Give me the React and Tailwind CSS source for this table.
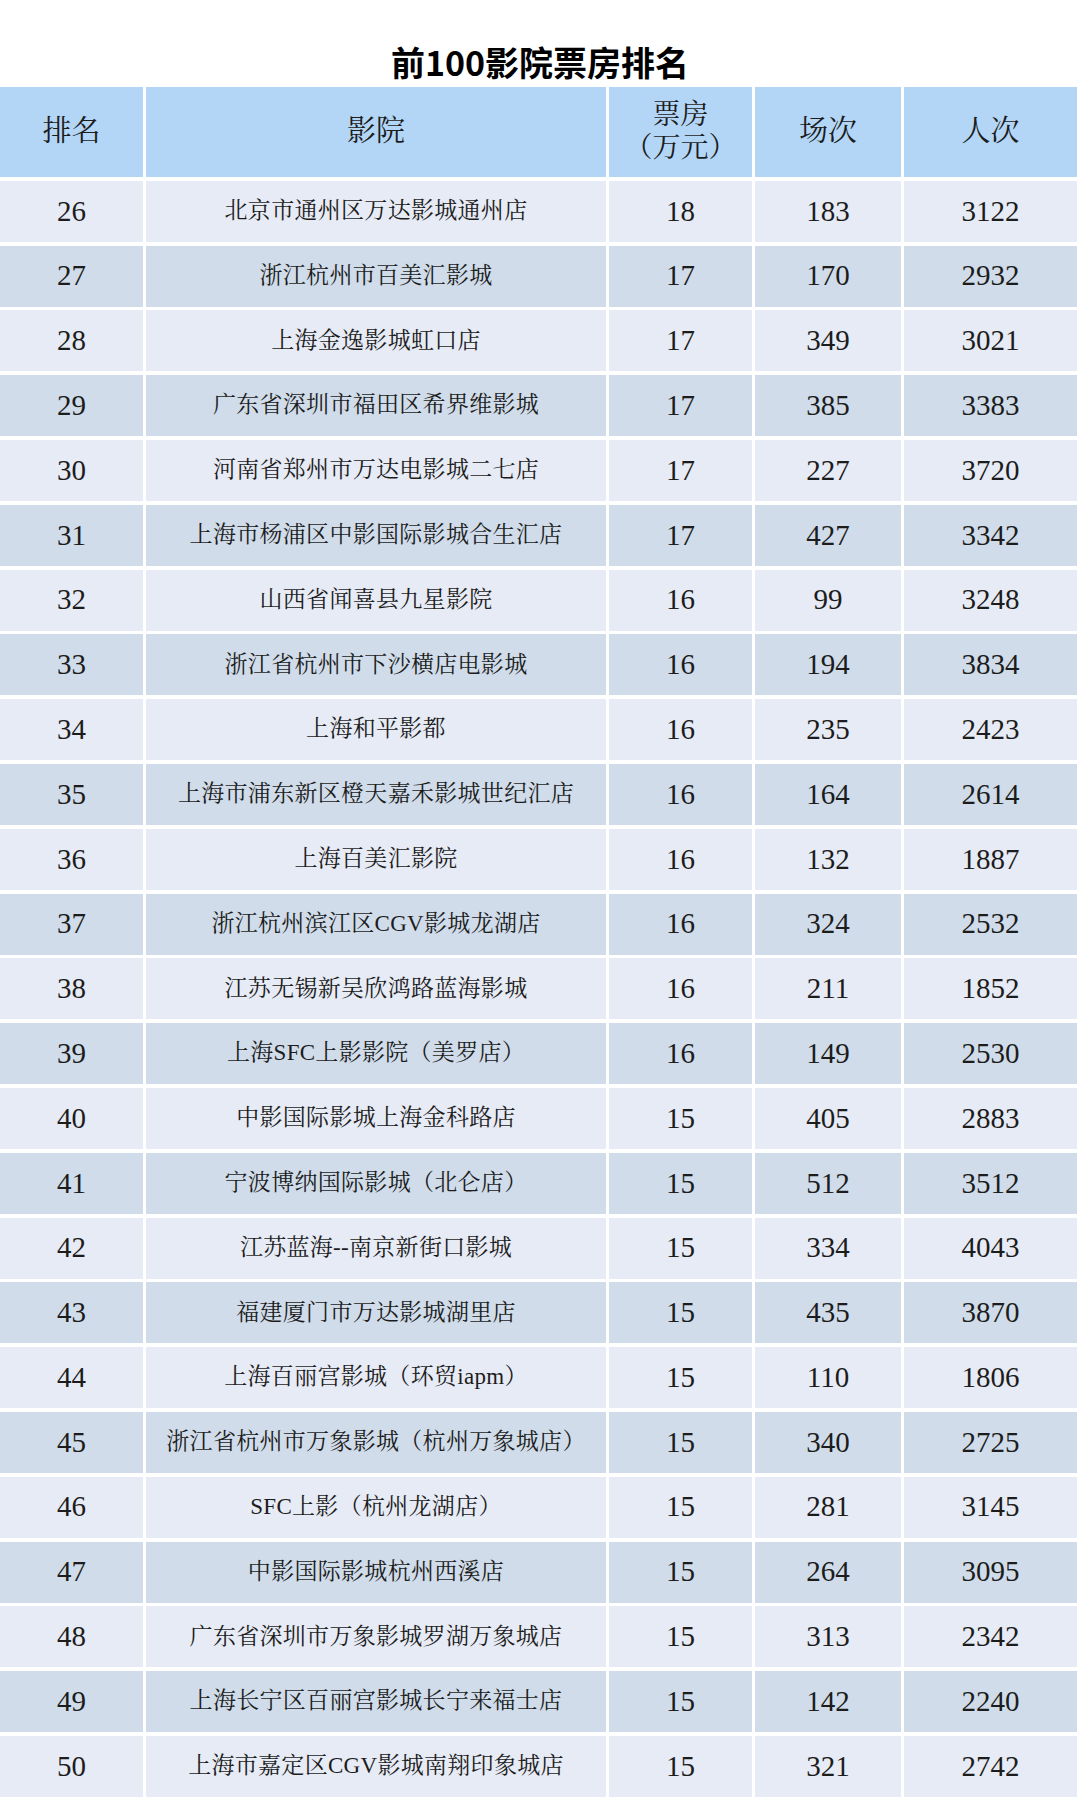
import React from "react";

const rows = [
  [26, "北京市通州区万达影城通州店", 18, 183, 3122],
  [27, "浙江杭州市百美汇影城", 17, 170, 2932],
  [28, "上海金逸影城虹口店", 17, 349, 3021],
  [29, "广东省深圳市福田区希界维影城", 17, 385, 3383],
  [30, "河南省郑州市万达电影城二七店", 17, 227, 3720],
  [31, "上海市杨浦区中影国际影城合生汇店", 17, 427, 3342],
  [32, "山西省闻喜县九星影院", 16, 99, 3248],
  [33, "浙江省杭州市下沙横店电影城", 16, 194, 3834],
  [34, "上海和平影都", 16, 235, 2423],
  [35, "上海市浦东新区橙天嘉禾影城世纪汇店", 16, 164, 2614],
  [36, "上海百美汇影院", 16, 132, 1887],
  [37, "浙江杭州滨江区CGV影城龙湖店", 16, 324, 2532],
  [38, "江苏无锡新吴欣鸿路蓝海影城", 16, 211, 1852],
  [39, "上海SFC上影影院（美罗店）", 16, 149, 2530],
  [40, "中影国际影城上海金科路店", 15, 405, 2883],
  [41, "宁波博纳国际影城（北仑店）", 15, 512, 3512],
  [42, "江苏蓝海--南京新街口影城", 15, 334, 4043],
  [43, "福建厦门市万达影城湖里店", 15, 435, 3870],
  [44, "上海百丽宫影城（环贸iapm）", 15, 110, 1806],
  [45, "浙江省杭州市万象影城（杭州万象城店）", 15, 340, 2725],
  [46, "SFC上影（杭州龙湖店）", 15, 281, 3145],
  [47, "中影国际影城杭州西溪店", 15, 264, 3095],
  [48, "广东省深圳市万象影城罗湖万象城店", 15, 313, 2342],
  [49, "上海长宁区百丽宫影城长宁来福士店", 15, 142, 2240],
  [50, "上海市嘉定区CGV影城南翔印象城店", 15, 321, 2742],
];

const serif = {
  fontFamily:
    '"Liberation Serif", "Noto Serif CJK SC", "Noto Sans CJK SC", serif',
};

export default function App() {
  return (
    <div className="w-[1080px] h-[1800px] overflow-hidden bg-white">
      <div
        className="h-[87px] pt-[43px] text-center text-[34px] leading-[38px] font-bold text-black"
        style={{ fontFamily: '"Noto Sans CJK SC", "Noto Sans", sans-serif' }}
      >
        前100影院票房排名
      </div>
      <div
        className="grid grid-cols-[143px_460px_143px_146px_173px] gap-x-[3px] gap-y-[3.8px] text-[#1c1c1c]"
        style={serif}
      >
        <div className="h-[90px] bg-[#b3d6f7] flex items-center justify-center text-[29px]">排名</div>
        <div className="h-[90px] bg-[#b3d6f7] flex items-center justify-center text-[29px]">影院</div>
        <div className="h-[90px] bg-[#b3d6f7] flex flex-col items-center justify-center text-[28px] leading-[33px] pb-[2px]">
          <span>票房</span>
          <span>（万元）</span>
        </div>
        <div className="h-[90px] bg-[#b3d6f7] flex items-center justify-center text-[29px]">场次</div>
        <div className="h-[90px] bg-[#b3d6f7] flex items-center justify-center text-[29px]">人次</div>
        {rows.map((r, i) => {
          const bg = i % 2 === 0 ? "bg-[#e7ebf5]" : "bg-[#d0dcea]";
          return (
            <React.Fragment key={r[0]}>
              <div className={`h-[61px] ${bg} flex items-center justify-center text-[29px]`}>{r[0]}</div>
              <div className={`h-[61px] ${bg} flex items-center justify-center text-[23px] tracking-[0.3px]`}>{r[1]}</div>
              <div className={`h-[61px] ${bg} flex items-center justify-center text-[29px]`}>{r[2]}</div>
              <div className={`h-[61px] ${bg} flex items-center justify-center text-[29px]`}>{r[3]}</div>
              <div className={`h-[61px] ${bg} flex items-center justify-center text-[29px]`}>{r[4]}</div>
            </React.Fragment>
          );
        })}
      </div>
    </div>
  );
}
